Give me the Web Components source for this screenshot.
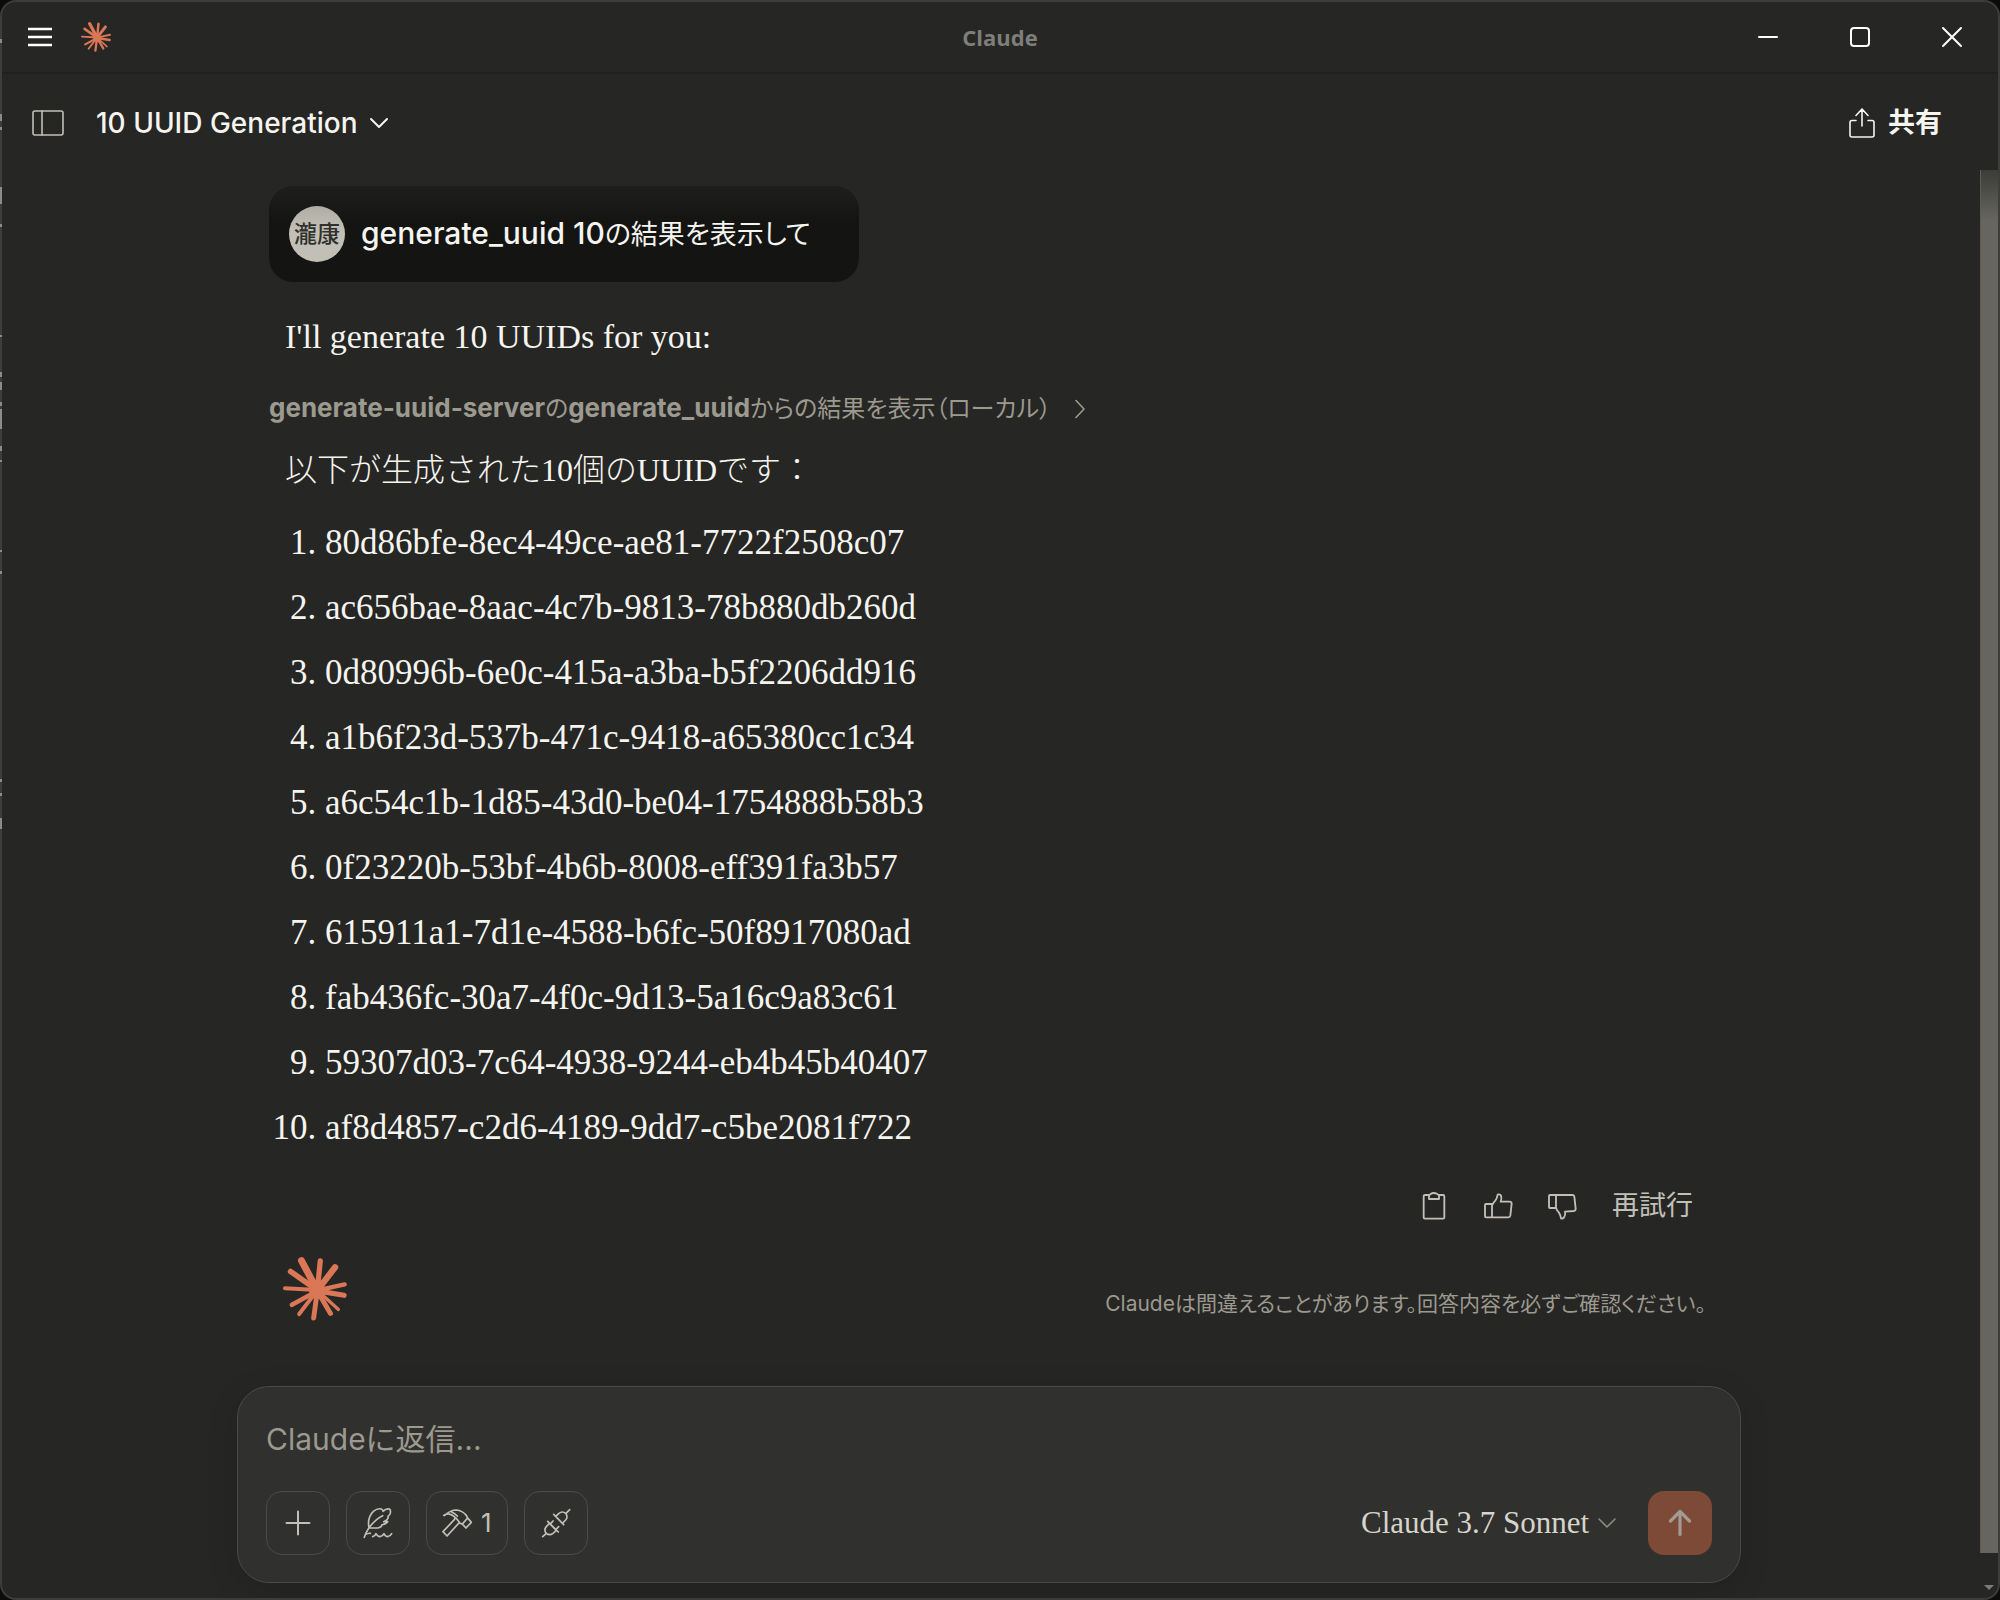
<!DOCTYPE html>
<html lang="ja">
<head>
<meta charset="utf-8">
<title>Claude</title>
<style>
  body { margin: 0; background: #0c0c0c; }
</style>
</head>
<body>
<app-window>
  <title-bar slot="title">Claude</title-bar>
  <chat-header slot="header">10 UUID Generation</chat-header>
  <user-message initials="瀧康"><span>generate_uuid 10</span>の結果を表示して</user-message>
  <assistant-text>I'll generate 10 UUIDs for you:</assistant-text>
  <tool-result server="generate-uuid-server" tool="generate_uuid"></tool-result>
  <assistant-text lang="ja">以下が生成された10個のUUIDです：</assistant-text>
  <uuid-list></uuid-list>
  <message-actions></message-actions>
  <chat-note>Claudeは間違えることがあります。回答内容を必ずご確認ください。</chat-note>
  <chat-composer slot="footer"></chat-composer>
</app-window>

<script>
const base = `
  *, *::before, *::after { box-sizing: border-box; }
  :host { display: block; }
  button { font: inherit; color: inherit; background: none; border: 0; padding: 0; margin: 0; cursor: pointer; display: flex; align-items: center; }
  svg { display: block; flex: none; fill: none; stroke: currentColor; stroke-linecap: round; stroke-linejoin: round; }
`;

function define(name, css, html) {
  customElements.define(name, class extends HTMLElement {
    constructor() {
      super();
      const root = this.attachShadow({ mode: "open" });
      root.innerHTML = `<style>${base}${css}</style>` + (typeof html === "function" ? html(this) : html);
    }
  });
}

define("claude-logo", `
  :host { width: var(--logo-size, 64px); height: var(--logo-size, 64px); flex: none; }
  svg { width: 100%; height: 100%; stroke: #d97757; }
`, `
  <svg viewBox="188 77 194 194" aria-hidden="true">
    <circle cx="292" cy="179" r="25" fill="#d97757" stroke="none"/>
    <path stroke-width="21" d="M292 178 244 88"/>
    <path stroke-width="16" d="M292 178 301 89"/>
    <path stroke-width="19" d="M292 178 346 108"/>
    <path stroke-width="13" d="M292 178 375 160"/>
    <path stroke-width="16" d="M292 180 373 193"/>
    <path stroke-width="10" d="M292 178 356 236"/>
    <path stroke-width="15" d="M292 180 332 248"/>
    <path stroke-width="15" d="M292 180 281 262"/>
    <path stroke-width="12" d="M292 178 237 250"/>
    <path stroke-width="14" d="M292 180 215 222"/>
    <path stroke-width="12" d="M292 177 194 172"/>
    <path stroke-width="17" d="M292 178 211 121"/>
  </svg>`);

define("app-window", `
  :host {
    --bg: #262624; --text: #f5f4ef; --muted: #9c998f; --icon: #c2c0b6; --line: #4a4a47;
    --sans: Inter, "Noto Sans CJK JP", sans-serif;
    --serif: "Liberation Serif", "Noto Sans CJK JP", serif;
    font-family: var(--sans); color: var(--text);
    font-feature-settings: "palt";
  }
  .frame { position: relative; display: flex; flex-direction: column; min-height: 100vh; background: var(--bg); border: 2px solid #3d3d3c; border-radius: 16px; overflow: hidden; }
  .body { flex: 1; display: flex; }
  main { flex: 1; min-width: 0; display: flex; flex-direction: column; padding: 16px 36px 15px 32px; }
  .thread { width: 100%; max-width: 1440px; margin: 0 auto; }
  .foot { width: 100%; max-width: 1504px; margin: auto auto 0; }
  .track { width: 18px; display: flex; flex-direction: column; align-items: center; }
  .thumb { flex: 1; width: 18px; background: linear-gradient(#3c3c38, #66665f 50px); border-left: 1px solid #5c5c55; }
  .arrow { height: 45px; padding-top: 32px; }
  .arrow svg { fill: #7d7c74; stroke: none; }
  .edge { position: absolute; left: -2px; top: 0; width: 2px; height: 840px; stroke: none; }
`, `
  <div class="frame">
    <slot name="title"></slot>
    <slot name="header"></slot>
    <div class="body">
      <main>
        <div class="thread"><slot></slot></div>
        <div class="foot"><slot name="footer"></slot></div>
      </main>
      <div class="track" aria-hidden="true"><div class="thumb"></div><div class="arrow"><svg width="10" height="5" viewBox="0 0 10 5"><path d="M0 0h10L5 5z"/></svg></div></div>
    </div>
  </div>
  <svg class="edge" style="left:0;top:2px" viewBox="0 0 2 840" aria-hidden="true"><path fill="#8c8c8a" d="M0 37h2v4H0zM0 112h2v7H0zM0 125h2v3H0zM0 185h2v17H0zM0 222h2v3H0zM0 333h2v2H0zM0 370h2v5H0zM0 380h2v8H0zM0 400h2v4H0zM0 407h2v20H0zM0 444h2v5H0zM0 458h2v2H0zM0 548h2v2H0zM0 569h2v3H0zM0 777h2v3H0zM0 791h2v3H0zM0 816h2v11H0z"/></svg>`);

define("title-bar", `
  :host { border-bottom: 2px solid #21211f; }
  header { display: grid; grid-template-columns: 1fr auto 1fr; align-items: center; height: 70px; color: #fff; }
  .left { display: flex; align-items: center; gap: 29px; padding-left: 26px; --logo-size: 30px; }
  .name { font: 700 22px/32px "Open Sans", sans-serif; color: #7f7e7a; }
  .right { display: flex; justify-content: flex-end; gap: 70px; padding-right: 35px; }
`, `
  <header>
    <div class="left">
      <button aria-label="メニュー"><svg width="24" height="20" viewBox="0 0 24 20" stroke-width="2.500" style="stroke-linecap:butt"><path d="M0 2h24M0 10h24M0 18h24"/></svg></button>
      <claude-logo></claude-logo>
    </div>
    <div class="name"><slot></slot></div>
    <div class="right">
      <button aria-label="最小化"><svg width="22" height="22" viewBox="0 0 22 22" stroke-width="2"><path d="M2 11h18"/></svg></button>
      <button aria-label="最大化"><svg width="22" height="22" viewBox="0 0 22 22" stroke-width="2"><rect x="2" y="2" width="18" height="18" rx="3"/></svg></button>
      <button aria-label="閉じる"><svg width="22" height="22" viewBox="0 0 22 22" stroke-width="2"><path d="M2 2l18 18M20 2 2 20"/></svg></button>
    </div>
  </header>`);

define("chat-header", `
  header { display: flex; align-items: center; height: 96px; padding: 2px 56px 0 30px; }
  .panel { color: var(--icon); margin-right: 32px; }
  .title { gap: 12px; font-size: 28px; line-height: 40px; font-weight: 500; }
  .share { margin-left: auto; gap: 13px; font-size: 27px; line-height: 40px; font-weight: 700; }
`, `
  <header>
    <button class="panel" aria-label="サイドバー"><svg width="32" height="26" viewBox="0 0 32 26" stroke-width="1.6"><rect x="1" y="1" width="30" height="24" rx="2"/><path d="M10 1v24"/></svg></button>
    <button class="title"><slot></slot><svg width="18" height="12" viewBox="0 0 18 12" stroke-width="2"><path d="M1 2l8 8 8-8"/></svg></button>
    <button class="share"><svg width="26" height="30" viewBox="0 0 26 30" stroke-width="1.6"><path d="M7 12.500H3a2 2 0 0 0-2 2V27a2 2 0 0 0 2 2h20a2 2 0 0 0 2-2V14.500a2 2 0 0 0-2-2h-4M13 18V1M7 7.500 13 1l6 6.500"/></svg>共有</button>
  </header>`);

define("user-message", `
  .bubble { display: inline-flex; align-items: center; gap: 16px; padding: 20px 48px 20px 20px; border-radius: 24px; background: linear-gradient(#1e1e1c, #141413 36px); vertical-align: top; }
  .avatar { width: 56px; height: 56px; border-radius: 50%; background: linear-gradient(#aeaca3, #c2c0b6 24px); color: #30302e; display: flex; align-items: center; justify-content: center; font-size: 23px; line-height: 32px; font-weight: 500; }
  .text { font-size: 27px; line-height: 40px; }
  ::slotted(span) { font-size: 30px; font-weight: 500; }
`, el => `
  <div class="bubble"><div class="avatar">${el.getAttribute("initials")}</div><div class="text"><slot></slot></div></div>`);

define("assistant-text", `
  :host { margin-top: 28px; padding: 0 16px; font-family: var(--serif); font-size: 34px; line-height: 53px; }
  :host([lang="ja"]) { margin-top: 17px; font-size: 32px; font-weight: 300; font-feature-settings: normal; }
`, `<slot></slot>`);

define("tool-result", `
  :host { margin-top: 27px; }
  button { color: var(--muted); font-size: 24px; line-height: 36px; gap: 24px; }
  b { font-size: 26px; }
`, el => `
  <button><span><b>${el.getAttribute("server")}</b>の<b>${el.getAttribute("tool")}</b>からの結果を表示（ローカル）</span><svg width="10" height="20" viewBox="0 0 10 20" stroke-width="1.6"><path d="M1 1.500l8 8.500-8 8.500"/></svg></button>`);

define("uuid-list", `
  ol { margin: 19px 0 0; padding: 0 0 0 56px; display: flex; flex-direction: column; gap: 12px; font-family: var(--serif); font-size: 35px; line-height: 53px; }
`, `
  <ol>
    <li>80d86bfe-8ec4-49ce-ae81-7722f2508c07</li>
    <li>ac656bae-8aac-4c7b-9813-78b880db260d</li>
    <li>0d80996b-6e0c-415a-a3ba-b5f2206dd916</li>
    <li>a1b6f23d-537b-471c-9418-a65380cc1c34</li>
    <li>a6c54c1b-1d85-43d0-be04-1754888b58b3</li>
    <li>0f23220b-53bf-4b6b-8008-eff391fa3b57</li>
    <li>615911a1-7d1e-4588-b6fc-50f8917080ad</li>
    <li>fab436fc-30a7-4f0c-9d13-5a16c9a83c61</li>
    <li>59307d03-7c64-4938-9244-eb4b45b40407</li>
    <li>af8d4857-c2d6-4189-9dd7-c5be2081f722</li>
  </ol>`);

define("message-actions", `
  :host { margin-top: 20px; }
  .row { display: flex; justify-content: flex-end; align-items: center; height: 64px; gap: 32px; padding-right: 16px; color: var(--icon); }
  .retry { font-size: 27px; line-height: 40px; margin-left: 2px; }
`, `
  <div class="row">
    <button aria-label="コピー"><svg width="32" height="32" viewBox="114 83 96 96" stroke-width="5.500"><path d="M147 98h-12q-4 0-4 4v63q0 4 4 4h54q4 0 4-4v-63q0-4-4-4h-12M147 98q3 0 5-3 8-6 20 0 2 3 5 3v12h-30z"/></svg></button>
    <button aria-label="良い回答"><svg width="32" height="32" viewBox="306 80 96 96" stroke-width="5.500"><path d="M336 122h-18q-3 0-3 3v34q0 3 3 3h67q5 0 6-5l4-36q0-6-6-6h-27q4-10 1-18-3-6-10-3-2 12-7 18-6 6-10 14zM336 122v40"/></svg></button>
    <button aria-label="悪い回答"><svg width="32" height="32" viewBox="498 86 96 96" stroke-width="5.500"><path d="M528 140h-18q-3 0-3-3v-33q0-3 3-3h67q5 0 6 5l4 36q0 6-6 7l-26 2q2 11-3 17-4 5-9 3-2-11-6-17-6-6-9-14zM528 140v-39"/></svg></button>
    <button class="retry">再試行</button>
  </div>`);

define("chat-note", `
  :host { margin-top: 19px; }
  .row { display: flex; align-items: flex-start; justify-content: space-between; padding: 0 3px 0 14px; color: var(--muted); font-size: 21px; line-height: 36px; }
  p { margin: 29px 0 0; }
`, `<div class="row"><claude-logo></claude-logo><p><slot></slot></p></div>`);

define("chat-composer", `
  form { background: #30302e; border: 1px solid var(--line); border-radius: 32px; padding: 32px 28px 27px; box-shadow: 0 8px 32px rgba(0, 0, 0, .12); display: flex; flex-direction: column; gap: 31px; }
  textarea { display: block; width: 100%; height: 41px; padding: 0; border: 0; outline: 0; resize: none; background: none; color: var(--text); font: 400 30px/41px var(--sans); overflow: hidden; }
  textarea::placeholder { color: var(--muted); opacity: 1; }
  .tools { display: flex; align-items: center; gap: 16px; color: var(--icon); }
  .tool { min-width: 64px; height: 64px; padding: 0 15px; justify-content: center; gap: 7px; border: 1px solid var(--line); border-radius: 16px; font-size: 26px; line-height: 40px; }
  .model { margin-left: auto; display: flex; align-items: center; gap: 8px; margin-right: 16px; color: #8b8981; }
  select { appearance: none; border: 0; background: none; padding: 0; color: #d6d4cb; font: 400 31px/44px var(--serif); }
  .send { width: 64px; height: 64px; justify-content: center; border-radius: 16px; background: #7d4a37; color: #a09b94; }
`, `
  <form onsubmit="return false">
    <textarea rows="1" aria-label="メッセージ" placeholder="Claudeに返信..."></textarea>
    <div class="tools">
      <button type="button" class="tool" aria-label="追加"><svg width="32" height="32" viewBox="0 0 32 32" stroke-width="2"><path d="M16 4.500v23M4.500 16h23"/></svg></button>
      <button type="button" class="tool" aria-label="スタイル"><svg width="32" height="32" viewBox="366 141 96 96" stroke-width="5"><path d="M373 232q4-14 14-29 22-28 41-36M387 203q-6-30 13-49 13-10 24-7 5 2 5 7 9-9 19-7 6 4 2 15-3 6-6 7 3 9-13 16h12q-4 6-18 10 0 7-12 9h-24M376 224q8-5 15-4M398 230q7-1 10-9 5 9 12 9 8-1 12-9 4 9 11 9 8-1 12-9"/></svg></button>
      <button type="button" class="tool" aria-label="ツール"><svg width="32" height="32" viewBox="612 140 96 96" stroke-width="5"><path d="M620 165q17-16 35-16 18 2 30 16l3 7 12 14-16 17-10-11-3-1q-7-5-12 1l-32 35-12-13 34-36q4-5 0-9-16-15-32-4M654 173l10 13M689 173l-15 17M640 154q12 6 18 13"/></svg>1</button>
      <button type="button" class="tool" aria-label="接続"><svg width="32" height="32" viewBox="900 141 96 96" stroke-width="5"><path d="M908 230l11-10M919 220q-9-10 0-20l9-10 21 21-10 9q-10 8-20 0zM923 184l32 32M932 191l7-8M948 208l8-8M989 149l-11 11M941 163l30 31M947 169l10-9q10-8 20 0 8 10 0 20l-10 10"/></svg></button>
      <label class="model"><select aria-label="モデル"><option>Claude 3.7 Sonnet</option></select><svg width="18" height="12" viewBox="0 0 18 12" stroke-width="1.600"><path d="M1 2l8 8 8-8"/></svg></label>
      <button class="send" aria-label="送信"><svg width="24" height="28" viewBox="0 0 24 28" stroke-width="3.200"><path d="M12 25.500V2.500M2.500 12 12 2.500l9.500 9.500"/></svg></button>
    </div>
  </form>`);
</script>
</body>
</html>
